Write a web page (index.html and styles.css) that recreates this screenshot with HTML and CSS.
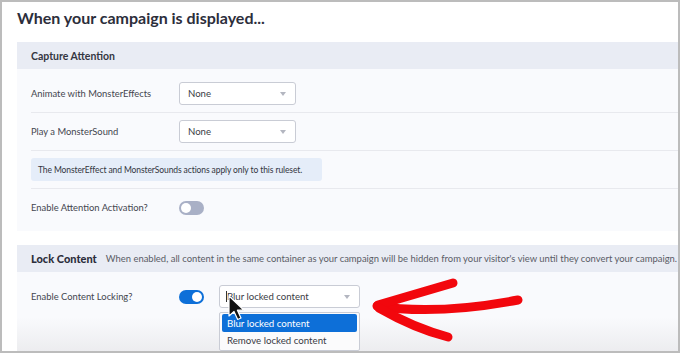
FILE: index.html
```html
<!DOCTYPE html>
<html lang="en">
<head>
    <meta charset="UTF-8">
    <title>Campaign Display Rules</title>
    <link rel="stylesheet" href="styles.css">
</head>
<body>

<div class="frame">
    <h1 class="title">When your campaign is displayed...</h1>

    <section class="panel">
        <div class="panel-head">Capture Attention</div>
        <div class="panel-body">
            <div class="row">
                <span class="label">Animate with MonsterEffects</span>
                <div class="select"><span>None</span><i class="caret"></i></div>
            </div>
            <div class="row">
                <span class="label">Play a MonsterSound</span>
                <div class="select"><span>None</span><i class="caret"></i></div>
            </div>
            <div class="row">
                <div class="notice">The MonsterEffect and MonsterSounds actions apply only to this ruleset.</div>
            </div>
            <div class="row last">
                <span class="label">Enable Attention Activation?</span>
                <span class="toggle"></span>
            </div>
        </div>
    </section>

    <section class="panel lock">
        <div class="panel-head">
            <strong>Lock Content</strong>
            <span class="desc">When enabled, all content in the same container as your campaign will be hidden from your visitor's view until they convert your campaign.</span>
        </div>
        <div class="panel-body">
            <div class="row last">
                <span class="label">Enable Content Locking?</span>
                <span class="toggle on"></span>
                <div class="select wide">
                    <span class="typed">Blur locked content</span><i class="caret"></i>
                    <ul class="menu">
                        <li class="active">Blur locked content</li>
                        <li>Remove locked content</li>
                    </ul>
                </div>
            </div>
        </div>
    </section>

    <!-- annotation + mouse pointer drawn over the screen -->
    <svg class="overlay" viewBox="0 0 680 353" width="680" height="353">
        <g fill="none" stroke="#f2070d" stroke-linecap="round" stroke-linejoin="round">
            <path d="M377 306 C 420 313, 470 309, 518 300" stroke-width="9"/>
            <path d="M453 283 L 378 305" stroke-width="9"/>
            <path d="M379 308 C 400 320, 425 331, 448 337" stroke-width="9"/>
        </g>
        <path d="M229 296 l0 20 l5 -4.5 l3.7 8 l3.3 -1.5 l-3.6 -7.8 l6.6 0 Z" fill="#111" stroke="#fff" stroke-width="1.2" stroke-linejoin="round"/>
    </svg>
</div>

</body>
</html>
```

FILE: styles.css
```css
body {
    margin: 0;
    padding: 0;
    font-family: 'Lato', 'Liberation Sans', sans-serif;
    background-color: #fff;
}

.frame {
    position: relative;
    width: 680px;
    height: 353px;
    box-sizing: border-box;
    border: 2px solid #bcbcbc;
    padding-left: 15px;
    overflow: hidden;
    background-color: #fff;
}

.title {
    margin: 0;
    padding: 2px 0 10px;
    font-size: 16px;
    line-height: 28px;
    font-weight: 700;
    color: #2c2e3b;
}

.panel {
    margin-bottom: 14px;
}

.panel-head {
    height: 27px;
    display: flex;
    align-items: center;
    padding-left: 14px;
    background-color: #e9ecf4;
    font-size: 10.5px;
    font-weight: 700;
    color: #343641;
    white-space: nowrap;
}

.panel-body {
    padding: 6px 0 5px 14px;
    background-color: #f9fafd;
}

.row {
    display: flex;
    align-items: center;
    min-height: 23px;
    padding: 7px 0;
    border-bottom: 1px solid #e8e9ee;
}

.row.last {
    border-bottom: none;
}

.label {
    width: 148px;
    font-size: 9.4px;
    color: #44464f;
}

.select {
    position: relative;
    width: 117px;
    height: 23px;
    box-sizing: border-box;
    display: flex;
    align-items: center;
    padding-left: 8px;
    background-color: #fff;
    border: 1px solid #c9ccd5;
    border-radius: 3px;
    font-size: 9.6px;
    color: #3a3c45;
}

.select .caret {
    position: absolute;
    right: 9px;
    top: 9px;
    border-left: 3px solid transparent;
    border-right: 3px solid transparent;
    border-top: 4px solid #b3b6c0;
}

.select.wide {
    width: 141px;
    margin-left: 15px;
    padding-left: 6px;
}

.typed {
    border-left: 1px solid #333;
}

.notice {
    width: 291px;
    height: 23px;
    box-sizing: border-box;
    display: flex;
    align-items: center;
    padding-left: 7px;
    background-color: #e5edf9;
    border-radius: 3px;
    font-size: 8.5px;
    letter-spacing: -0.1px;
    color: #333541;
    white-space: nowrap;
}

.toggle {
    position: relative;
    width: 25px;
    height: 14px;
    border-radius: 7px;
    background-color: #a9b0c6;
}

.toggle::after {
    content: "";
    position: absolute;
    top: 2px;
    left: 2px;
    width: 10px;
    height: 10px;
    border-radius: 50%;
    background-color: #fff;
}

.toggle.on {
    background-color: #0d6fd8;
}

.toggle.on::after {
    left: 13px;
}

.lock .panel-head strong {
    font-size: 11px;
    color: #2c2e3b;
}

.lock .desc {
    margin-left: 9px;
    font-size: 9.45px;
    font-weight: 400;
    color: #5a5c66;
}

.lock .panel-body {
    height: 90px;
    background: linear-gradient(#f9fafd 45%, #e4e4e6);
}

.menu {
    position: absolute;
    top: 26px;
    left: -1px;
    width: 141px;
    margin: 0;
    padding: 1px 2px;
    box-sizing: border-box;
    list-style: none;
    background-color: #fbfbfc;
    border: 1px solid #c9ccd5;
    border-radius: 2px;
}

.menu li {
    height: 18px;
    line-height: 18px;
    padding-left: 5px;
    border-radius: 2px;
    font-size: 9.7px;
    color: #3a3c45;
}

.menu li + li {
    height: 17px;
    line-height: 17px;
}

.menu li.active {
    background-color: #0d6fd8;
    color: #fff;
}

.overlay {
    position: absolute;
    left: -2px;
    top: -2px;
    pointer-events: none;
}
```
